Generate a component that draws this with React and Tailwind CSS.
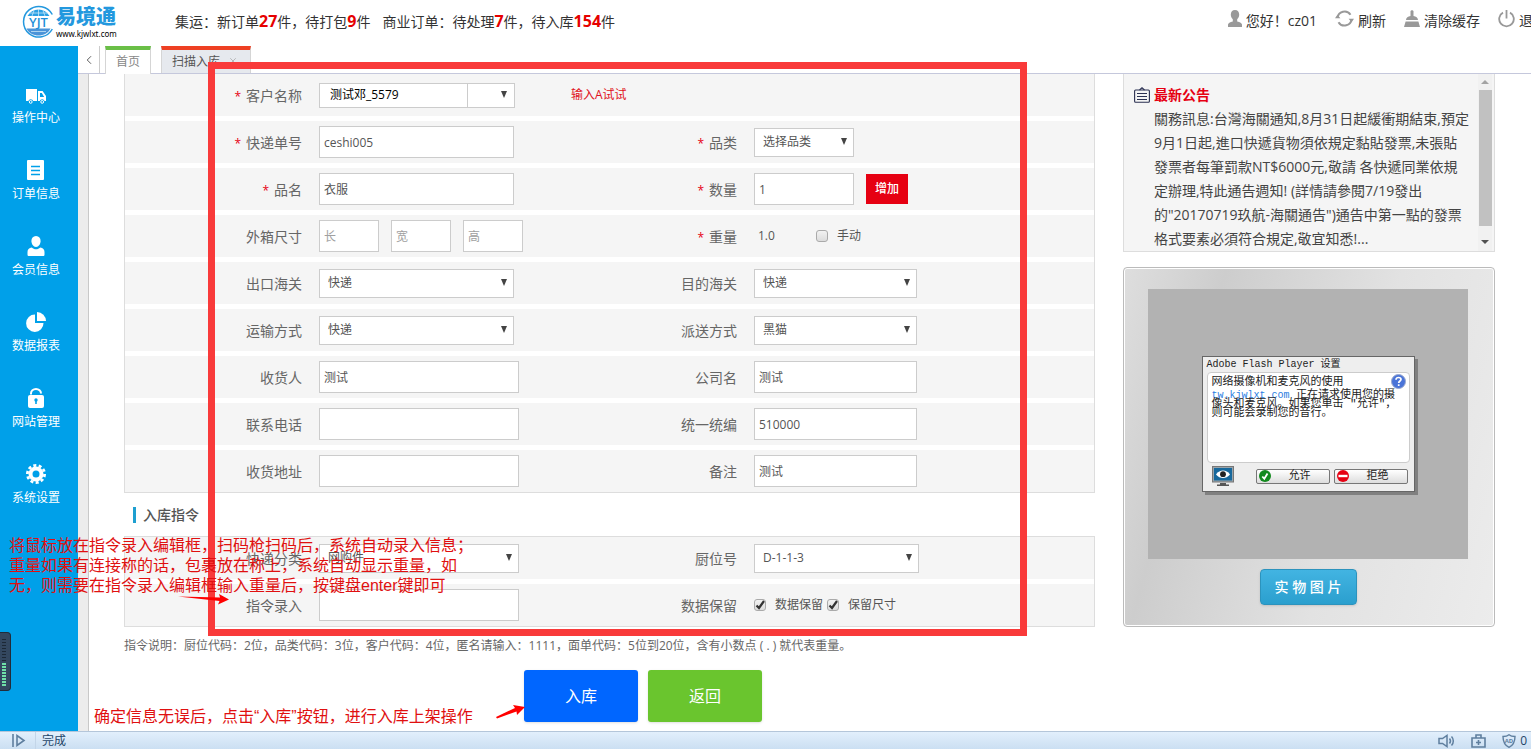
import { ChevronLeft, X } from 'lucide-react';
import clsx from 'clsx';

const MENU = [
  { label: '操作中心', icon: TruckIcon },
  { label: '订单信息', icon: OrderIcon },
  { label: '会员信息', icon: MemberIcon },
  { label: '数据报表', icon: PieIcon },
  { label: '网站管理', icon: LockIcon },
  { label: '系统设置', icon: GearIcon },
];

const NOTICE = [
  '關務訊息:台灣海關通知,8月31日起緩衝期結束,預定',
  '9月1日起,進口快遞貨物須依規定黏貼發票,未張貼',
  '發票者每筆罰款NT$6000元,敬請 各快遞同業依規',
  '定辦理,特此通告週知! (詳情請參閱7/19發出',
  '的"20170719玖航-海關通告")通告中第一點的發票',
  '格式要素必須符合規定,敬宜知悉!...',
];

/* ---------- icons ---------- */

function TruckIcon() {
  return (
    <svg width="20" height="15" viewBox="0 0 20 15" fill="#fff">
      <path fillRule="evenodd" d="M0 0h11v12H7.2a2.6 2.6 0 0 0-4.9 0H0zM12 2h4.6L20 7v5h-1.4a2.6 2.6 0 0 0-4.9 0H12zm2 2v4h4.2l-2.4-4z" />
      <circle cx="4.7" cy="12.9" r="1.4" fill="none" stroke="#fff" />
      <circle cx="16.2" cy="12.9" r="1.4" fill="none" stroke="#fff" />
    </svg>
  );
}

function OrderIcon() {
  return (
    <svg width="18" height="20" viewBox="0 0 18 20">
      <rect width="17" height="20" rx="1" fill="#fff" />
      <path d="M4 6.5h9M4 10.5h9M4 14.5h9" stroke="#00a0e9" strokeWidth="1.4" />
    </svg>
  );
}

function MemberIcon() {
  return (
    <svg width="18" height="20" viewBox="0 0 18 20" fill="#fff">
      <path d="M9 0c3 0 4.6 2.200 4.600 5S11.700 11 9 11 4.400 7.800 4.400 5 6 0 9 0z" />
      <path d="M4.800 11.500C6 12.700 7.400 13.300 9 13.300s3-.6 4.200-1.800C16 12 17.500 13.600 17.500 16v2.500c0 1-.5 1.500-1.500 1.500H2c-1 0-1.500-.5-1.500-1.500V16c0-2.400 1.500-4 4.300-4.500z" />
    </svg>
  );
}

function PieIcon() {
  return (
    <svg width="20" height="20" viewBox="0 0 20 20" fill="#fff">
      <path d="M9 2.500V11h8.500A8.700 8.700 0 1 1 9 2.500z" />
      <path d="M11 0a9 9 0 0 1 9 9h-9z" />
    </svg>
  );
}

function LockIcon() {
  return (
    <svg width="16" height="20" viewBox="0 0 16 20">
      <path d="M3 6.500V5.500a5 4.500 0 0 1 10 0" fill="none" stroke="#fff" strokeWidth="2" />
      <rect y="7" width="16" height="13" rx="2" fill="#fff" />
      <circle cx="8" cy="12" r="1.700" fill="#00a0e9" />
      <path d="M8 12v4" stroke="#00a0e9" strokeWidth="1.600" />
    </svg>
  );
}

function GearIcon() {
  return (
    <svg width="20" height="20" viewBox="0 0 20 20" fill="none" stroke="#fff">
      <circle cx="10" cy="10" r="5.500" strokeWidth="4" />
      <circle cx="10" cy="10" r="8.600" strokeWidth="2.800" pathLength="100" strokeDasharray="5.600 4.400" />
    </svg>
  );
}

function Logo() {
  return (
    <svg width="33" height="34" viewBox="0 0 33 34" aria-hidden="true">
      <path d="M30.300 9.500A15.300 15.300 0 1 0 30.300 24" fill="none" stroke="#2398de" strokeWidth="1.500" />
      <path d="M5.500 11a12.500 12.500 0 0 1 22 0z" fill="#2ba0e4" />
      <path d="M4.500 23.500h24c-2 4.500-7 7-12 7s-10-2.500-12-7z" fill="#4b94d8" />
      <path d="M16.500 4v7M12 5.500 10 11M21 5.500 23 11M7 8h19M9 26.500h15" stroke="#d9effb" strokeWidth=".7" />
      <text x="16.500" y="21.500" textAnchor="middle" fontSize="13" fontWeight="600" fontFamily="Open Sans, sans-serif" fill="#1f8fd8">YJT</text>
    </svg>
  );
}

function UserGlyph() {
  return (
    <svg width="14" height="18" viewBox="0 0 14 18" fill="#999">
      <path d="M7 0c2.700 0 4.200 1.900 4.200 4.500 0 2-.8 3.700-2 4.700v2.300c2.800.5 4.800 1.600 4.800 3.500H0c0-1.900 2-3 4.800-3.500V9.200c-1.200-1-2-2.700-2-4.700C2.800 1.900 4.300 0 7 0z" />
      <path d="M0 14.500h14V17H0z" />
    </svg>
  );
}

function RefreshGlyph() {
  return (
    <svg width="19" height="18" viewBox="0 0 19 18" fill="none" stroke="#999" strokeWidth="2">
      <path d="M2.500 8A7.100 7.100 0 0 1 15.500 4.800M16.600 9A7.100 7.100 0 0 1 3.500 12.200" />
      <path d="M0 8.200h5.400L2.400 4.800zM13.600 8.800H19l-2.400 3.400z" fill="#999" stroke="none" />
    </svg>
  );
}

function BroomGlyph() {
  return (
    <svg width="16" height="18" viewBox="0 0 16 18" fill="#999">
      <path d="M6.500 1 8 0l1.500 1v5c2.500.5 4.500 1.800 4.500 4H2c0-2.200 2-3.500 4.500-4zM1.600 11.500h12.800L16 17H0z" />
    </svg>
  );
}

function PowerGlyph() {
  return (
    <svg width="17" height="18" viewBox="0 0 17 18" fill="none" stroke="#999" strokeWidth="1.800">
      <path d="M5 2.600a7.300 7.300 0 1 0 7 0M8.500 0v8.500" />
    </svg>
  );
}

function BoardGlyph() {
  return (
    <svg width="16" height="16" viewBox="0 0 16 16" fill="none" stroke="#2b3152" strokeWidth="1.100">
      <rect x=".6" y="3" width="14.800" height="12.300" rx="1" />
      <path d="M5.500 3 8 .8 10.500 3M3 6.500h10M3 9.500h10M3 12.500h10" />
    </svg>
  );
}

/* ---------- form parts ---------- */

function Row({ children }) {
  return (
    <div className="grid h-[42px] grid-cols-[177fr_321fr_80fr_340fr] items-center gap-x-[17px] bg-[#f5f5f5]">
      {children}
    </div>
  );
}

function Label({ htmlFor, required, children }) {
  return (
    <label htmlFor={htmlFor} className="pt-0.5 whitespace-nowrap text-right text-sm text-[#666]">
      {required && <span className="mr-[5px] text-xs text-[#e60012]">*</span>}
      {children}
    </label>
  );
}

function TextField({ id, className, ...rest }) {
  return (
    <input
      id={id}
      type="text"
      className={clsx('block h-8 border border-[#ccc] bg-white px-1 text-xs text-[#555] outline-none placeholder:text-[#a0a0a0]', className)}
      {...rest}
    />
  );
}

function Select({ id, value, className }) {
  return (
    <div className={clsx('relative h-[29px]', className)}>
      <select id={id} className="h-full w-full appearance-none border border-[#ccc] bg-white px-2 text-xs text-[#555] outline-none">
        <option>{value}</option>
      </select>
      <Caret />
    </div>
  );
}

function Caret() {
  return (
    <svg className="pointer-events-none absolute right-[7px] top-1/2 -mt-1" width="6" height="7" viewBox="0 0 6 7">
      <path d="M0 0h6L3 7z" fill="#444" />
    </svg>
  );
}

function Check({ id, label, checked }) {
  return (
    <label htmlFor={id} className="flex items-center text-xs text-[#555]">
      <span className="relative mr-[9px] block size-3">
        <input
          id={id}
          type="checkbox"
          defaultChecked={checked}
          className="peer block size-3 appearance-none rounded-[3px] border border-[#aaa] bg-linear-to-b from-[#f2f2f2] to-[#dcdcdc]"
        />
        <svg className="pointer-events-none absolute inset-0 hidden peer-checked:block" width="12" height="12" viewBox="0 0 12 12">
          <path d="M2.500 6.500 5 9l5-7" fill="none" stroke="#333" strokeWidth="2.200" />
        </svg>
      </span>
      {label}
    </label>
  );
}

/* ---------- page sections ---------- */

function Header() {
  return (
    <header className="flex h-[46px] items-center overflow-hidden whitespace-nowrap bg-white pb-1 text-sm text-[#333]">
      <a href="#" className="flex w-[175px] shrink-0 items-center gap-px pl-[22px] pt-0.5">
        <Logo />
        <span className="flex flex-col">
          <b className="text-xl leading-6 font-black text-[#2398de]">易境通</b>
          <span className="font-['Noto_Sans',sans-serif] text-[8px] leading-[10px] text-black">www.kjwlxt.com</span>
        </span>
      </a>
      <p className="flex shrink-0 gap-3">
        <span>集运：新订单<Num>27</Num>件，待打包<Num>9</Num>件</span>
        <span>商业订单：待处理<Num>7</Num>件，待入库<Num>154</Num>件</span>
      </p>
      <nav className="-mr-4 ml-auto flex shrink-0 gap-[18px]">
        <TopLink icon={<UserGlyph />}>您好！cz01</TopLink>
        <TopLink icon={<RefreshGlyph />}>刷新</TopLink>
        <TopLink icon={<BroomGlyph />}>清除缓存</TopLink>
        <TopLink icon={<PowerGlyph />}>退出</TopLink>
      </nav>
    </header>
  );
}

function Num({ children }) {
  return <b className="text-base leading-5 text-[#e60000]">{children}</b>;
}

function TopLink({ icon, children }) {
  return (
    <a href="#" className="flex items-center gap-1">
      <span className="pb-1">{icon}</span>
      {children}
    </a>
  );
}

function Sidebar() {
  return (
    <nav className="flex w-[78px] shrink-0 flex-col gap-8 bg-[#00a0e9] pr-1.5 pt-[38px]">
      {MENU.map(({ label, icon: Icon }) => (
        <a key={label} href="#" className="flex flex-col items-center gap-1 text-xs leading-5 text-white">
          <span className="flex h-5 items-end"><Icon /></span>
          {label}
        </a>
      ))}
    </nav>
  );
}

function Tabs() {
  return (
    <div className="flex h-7 border-b border-[#c5c8dc] text-xs leading-6">
      <button type="button" aria-label="收起" className="flex w-[22px] items-center justify-center border-r border-[#ccc] text-[#444]">
        <ChevronLeft size={14} strokeWidth={1.5} />
      </button>
      <a href="#" className="-mb-px ml-[5px] w-[46px] border-x border-t-4 border-x-[#d5d5d5] border-t-[#6abf47] bg-white text-center text-[#888]">
        首页
      </a>
      <a href="#" className="ml-2.5 flex w-[90px] items-start justify-between border-x border-t-4 border-x-[#d5d5d5] border-t-[#ee4023] bg-[#e6e9ee] pl-2.5 pr-3 text-[#555]">
        扫描入库
        <X size={10} strokeWidth={1.5} className="mt-1.5 text-[#999]" />
      </a>
    </div>
  );
}

function EntryForm() {
  return (
    <div className="flex flex-col gap-[5px] border border-t-0 border-[#ddd]">
      <Row>
        <Label htmlFor="customer" required>客户名称</Label>
        <div className="flex items-center whitespace-nowrap">
          <div className="relative flex h-[25px] w-[196px] shrink-0 border border-[#ccc] bg-white">
            <input id="customer" defaultValue="测试邓_5579" className="min-w-0 flex-1 border-r border-[#ccc] px-2.5 text-xs text-black outline-none" />
            <select aria-label="选择客户" className="w-[46px] appearance-none outline-none" />
            <Caret />
          </div>
          <span className="ml-14 text-xs text-[#e01020]">输入A试试</span>
        </div>
      </Row>
      <Row>
        <Label htmlFor="waybill" required>快递单号</Label>
        <TextField id="waybill" defaultValue="ceshi005" className="w-[195px]" />
        <Label htmlFor="category" required>品类</Label>
        <Select id="category" value="选择品类" className="w-[100px]" />
      </Row>
      <Row>
        <Label htmlFor="goods" required>品名</Label>
        <TextField id="goods" defaultValue="衣服" className="w-[195px]" />
        <Label htmlFor="qty" required>数量</Label>
        <div className="flex items-center gap-3">
          <TextField id="qty" defaultValue="1" className="w-[100px]" />
          <button type="button" className="h-[30px] w-[42px] bg-[#e60012] text-xs font-medium text-white">增加</button>
        </div>
      </Row>
      <Row>
        <Label htmlFor="len">外箱尺寸</Label>
        <div className="flex gap-3">
          <TextField id="len" placeholder="长" className="w-[60px]" />
          <TextField aria-label="宽" placeholder="宽" className="w-[60px]" />
          <TextField aria-label="高" placeholder="高" className="w-[60px]" />
        </div>
        <Label htmlFor="manual" required>重量</Label>
        <div className="flex items-center pl-1 text-xs text-[#555]">
          <span className="w-[58px]">1.0</span>
          <Check id="manual" label="手动" />
        </div>
      </Row>
      <Row>
        <Label htmlFor="export">出口海关</Label>
        <Select id="export" value="快递" className="w-[195px]" />
        <Label htmlFor="dest">目的海关</Label>
        <Select id="dest" value="快递" className="w-[163px]" />
      </Row>
      <Row>
        <Label htmlFor="transport">运输方式</Label>
        <Select id="transport" value="快递" className="w-[195px]" />
        <Label htmlFor="delivery">派送方式</Label>
        <Select id="delivery" value="黑猫" className="w-[163px]" />
      </Row>
      <Row>
        <Label htmlFor="receiver">收货人</Label>
        <TextField id="receiver" defaultValue="测试" className="w-[200px]" />
        <Label htmlFor="company">公司名</Label>
        <TextField id="company" defaultValue="测试" className="w-[163px]" />
      </Row>
      <Row>
        <Label htmlFor="phone">联系电话</Label>
        <TextField id="phone" className="w-[200px]" />
        <Label htmlFor="taxno">统一统编</Label>
        <TextField id="taxno" defaultValue="510000" className="w-[163px]" />
      </Row>
      <Row>
        <Label htmlFor="address">收货地址</Label>
        <TextField id="address" className="w-[200px]" />
        <Label htmlFor="remark">备注</Label>
        <TextField id="remark" defaultValue="测试" className="w-[163px]" />
      </Row>
    </div>
  );
}

function CommandForm() {
  return (
    <section>
      <h2 className="flex h-[43px] items-center gap-[7px] pl-[9px] text-sm font-medium text-[#555]">
        <span className="h-4 w-[3px] bg-[#1e9fd0]" />
        入库指令
      </h2>
      <div className="flex flex-col gap-[5px] border border-[#ddd]">
        <Row>
          <Label htmlFor="express">快递分类</Label>
          <Select id="express" value="网购件" className="w-[200px]" />
          <Label htmlFor="slot">厨位号</Label>
          <Select id="slot" value="D-1-1-3" className="w-[165px]" />
        </Row>
        <Row>
          <Label htmlFor="command">指令录入</Label>
          <TextField id="command" className="w-[200px]" />
          <Label htmlFor="keep-data">数据保留</Label>
          <div className="flex gap-1">
            <Check id="keep-data" label="数据保留" checked />
            <Check id="keep-size" label="保留尺寸" checked />
          </div>
        </Row>
      </div>
      <p className="mt-[9px] text-xs leading-5 text-[#666]">
        指令说明：厨位代码：2位，品类代码：3位，客户代码：4位，匿名请输入：1111，面单代码：5位到20位，含有小数点 ( . ) 就代表重量。
      </p>
      <div className="mt-3.5 flex justify-center gap-2.5 pl-[67px] text-base text-white">
        <button type="submit" className="h-[52px] w-[114px] rounded-[3px] bg-[#0066ff] shadow-sm">入库</button>
        <button type="button" className="h-[52px] w-[114px] rounded-[3px] bg-[#6ac52e] shadow-sm">返回</button>
      </div>
    </section>
  );
}

function Notice() {
  return (
    <section className="flex h-[178px] border border-t-0 border-[#ddd] bg-[#f5f5f5]">
      <div className="min-w-0 flex-1 overflow-hidden pl-2.5 pt-[9px]">
        <h2 className="flex items-center gap-1 text-sm leading-6 font-bold text-[#e60012]">
          <BoardGlyph />
          最新公告
        </h2>
        <div className="pl-5 font-['Open_Sans','Noto_Sans_CJK_TC',sans-serif] text-sm leading-6 text-[#444]">
          {NOTICE.map((line) => (
            <p key={line} className="whitespace-nowrap">{line}</p>
          ))}
        </div>
      </div>
      <div className="mr-0.5 flex w-[14px] flex-col items-center justify-between bg-[#f1f1f1] pb-[7px] pt-1.5">
        <svg width="8" height="4" viewBox="0 0 8 4"><path d="M0 4h8L4 0z" fill="#a3a3a3" /></svg>
        <div className="mb-3.5 mt-1.5 w-[13px] flex-1 bg-[#c1c1c1]" />
        <svg width="8" height="4" viewBox="0 0 8 4"><path d="M0 0h8L4 4z" fill="#505050" /></svg>
      </div>
    </section>
  );
}

function FlashDialog() {
  return (
    <div className="flex h-[136px] w-[213px] flex-col border border-[#666] bg-[#eee] px-1 font-['Liberation_Mono','Noto_Sans_CJK_SC',monospace] text-[#222] shadow-[3px_3px_0_#808080]">
      <h3 className="text-[10px] leading-[15px]">Adobe Flash Player 设置</h3>
      <div className="flex h-[91px] rounded border border-[#ccc] bg-white pl-1 pr-[3px]">
        <div className="min-w-0 flex-1 whitespace-nowrap text-[11px]">
          <p className="leading-[18px]">网络摄像机和麦克风的使用</p>
          {/* the plug-in packs these three lines tighter than the glyphs */}
          <div className="leading-[9px]">
            <p><a href="#" className="text-[10px] text-[#2a7de1]">tw.kjwlxt.com</a> 正在请求使用您的摄</p>
            <p>像头和麦克风。如果您单击 "允许"，</p>
            <p>则可能会录制您的音行。</p>
          </div>
        </div>
        <svg className="-ml-4 mt-[1px] shrink-0" width="15" height="15" viewBox="0 0 15 15">
          <circle cx="7.500" cy="7.500" r="7" fill="#4a74d8" stroke="#9aa8cc" />
          <path d="M5 5.800C5 4.300 6 3.500 7.500 3.500S10 4.300 10 5.500c0 1.500-2.300 1.600-2.300 3.500M7.700 10.300v1.700" fill="none" stroke="#fff" strokeWidth="1.700" />
        </svg>
      </div>
      <div className="flex flex-1 items-center pb-0.5 pl-[5px] pr-0.5">
        <svg width="22" height="20" viewBox="0 0 22 20">
          <rect x=".5" y=".5" width="21" height="15.500" fill="#9aa4aa" stroke="#777" />
          <rect x="2" y="2" width="18" height="12.500" fill="#17689c" />
          <path d="M4 8.500C6 5.500 8.500 4.500 11 4.500s5 1 7 4c-2 2.500-4.500 3.500-7 3.500s-5-1-7-3.500z" fill="#fff" />
          <circle cx="11" cy="8.200" r="2.900" fill="#222" />
          <path d="M8 17h6v1.500h3V20H5v-1.500h3z" fill="#555" />
        </svg>
        <DialogButton label="允许" className="ml-auto">
          <circle cx="6" cy="6" r="6" fill="#128a1e" />
          <path d="m3.300 6.500 2 2.300L8.500 3.500" fill="none" stroke="#fff" strokeWidth="1.800" />
        </DialogButton>
        <DialogButton label="拒绝" className="ml-1">
          <circle cx="6" cy="6" r="6" fill="#e60012" />
          <path d="M1.500 6h9" stroke="#fff" strokeWidth="2.400" />
        </DialogButton>
      </div>
    </div>
  );
}

function DialogButton({ label, className, children }) {
  return (
    <button type="button" className={clsx('flex h-[15px] w-[74px] items-center rounded-[2px] border border-[#777] bg-linear-to-b from-white to-[#ddd] pl-0.5 text-[11px] leading-3', className)}>
      <svg width="12" height="12" viewBox="0 0 12 12">{children}</svg>
      <span className="flex-1">{label}</span>
    </button>
  );
}

function CameraCard() {
  return (
    <section className="mt-[15px] flex flex-col items-center rounded border border-[#bbb] bg-[linear-gradient(105deg,#dedede,#cdcdcd_22%,#e2e2e2_60%,#ececec)] py-[21px] pr-0.5 ring-1 ring-white ring-inset">
      <div className="flex h-[270px] w-[320px] items-center justify-center bg-[#b2b2b2]">
        <FlashDialog />
      </div>
      <button type="button" className="mt-2.5 h-9 w-[97px] rounded border border-[#2c93bd] bg-linear-to-b from-[#42b4e2] to-[#2a9fce] text-sm font-medium text-white shadow">
        实 物 图 片
      </button>
    </section>
  );
}

function StatusBar() {
  return (
    <footer className="flex h-[18px] items-center border-t border-[#b4c6da] bg-linear-to-b from-[#e2effc] to-[#cbdff2] text-xs leading-4 text-[#1f4568]">
      <span className="flex h-full w-9 items-center border-r border-[#c3d5e8] pl-3">
        <svg width="14" height="13" viewBox="0 0 14 13" fill="none" stroke="#5f7f9f" strokeWidth="1.600">
          <path d="M1 0v13M5 1.500v10l7-5z" />
        </svg>
      </span>
      <span className="pl-1.5">完成</span>
      <div className="ml-auto flex items-center gap-4 pr-1">
        <svg width="17" height="14" viewBox="0 0 17 14" fill="none" stroke="#5f7f9f" strokeWidth="1.500">
          <path d="M1 4.500h3.500L9 1.500v11L4.500 9.500H1zM11.500 4.500a4 4 0 0 1 0 5M13.500 2.500a6.500 6.500 0 0 1 0 9" />
        </svg>
        <svg width="15" height="14" viewBox="0 0 15 14" fill="none" stroke="#5f7f9f" strokeWidth="1.600">
          <path d="M1 4h13v9H1zM5 4V1h5v3M7.500 6v5M5 8.500h5" />
        </svg>
        <span className="flex items-center gap-1">
          <svg width="14" height="14" viewBox="0 0 14 14">
            <path d="M1 2.500C3.500 2.500 5.500 2 7 .8 8.500 2 10.500 2.500 13 2.500c0 5-1 8.500-6 10.800C2 11 1 7.500 1 2.500z" fill="none" stroke="#5f7f9f" strokeWidth="1.400" />
            <text x="7" y="9" textAnchor="middle" fontSize="6" fontWeight="700" fontFamily="Open Sans, sans-serif" fill="#5f7f9f">AD</text>
          </svg>
          0
        </span>
      </div>
    </footer>
  );
}

function LevelMeter() {
  return (
    <div className="absolute left-0 top-[632px] h-[59px] w-[11px] rounded-r border border-l-0 border-[#222c3a] bg-[#33475f] px-0.5 py-1.5">
      <div className="h-6 w-1 bg-[repeating-linear-gradient(#1c2836_0_1px,#33475f_1px_3px)]" />
      <div className="h-[23px] w-1 bg-[repeating-linear-gradient(#6fe0a8_0_2px,#33475f_2px_3px)]" />
    </div>
  );
}

/* red frame, arrows and remarks that lie over the page */
function Annotations() {
  return (
    <div className="pointer-events-none absolute inset-0 font-['Liberation_Sans','Noto_Sans_CJK_SC',sans-serif] text-base leading-5 whitespace-nowrap text-[#e01010]">
      <div className="absolute left-[208px] top-[62px] h-[574px] w-[819px] border-[7px] border-[#f93a3a]" />
      <div className="absolute left-[9px] top-[536px]">
        <p>将鼠标放在指令录入编辑框，扫码枪扫码后，系统自动录入信息；</p>
        <p>重量如果有连接称的话，包裹放在称上，系统自动显示重量，如</p>
        <p>无，则需要在指令录入编辑框输入重量后，按键盘enter键即可</p>
      </div>
      <svg className="absolute left-[178px] top-[594px]" width="51" height="11" viewBox="0 0 51 11">
        <path d="M0 2.500 42 3.500 41 0l10 5.500L40 10.500l1.500-3.500z" fill="#f00" />
      </svg>
      <p className="absolute left-[94px] top-[707px]">确定信息无误后，点击“入库”按钮，进行入库上架操作</p>
      <svg className="absolute left-[496px] top-[704px]" width="29" height="15" viewBox="0 0 29 15">
        <path d="M0 13 19 4l-2-3 12 2-8 8-.5-3.500L1 14.500z" fill="#f00" />
      </svg>
    </div>
  );
}

export default function App() {
  return (
    <div className="relative flex min-h-screen flex-col overflow-x-hidden bg-white font-['Open_Sans','Noto_Sans_CJK_SC',sans-serif]">
      <Header />
      <div className="flex flex-1">
        <Sidebar />
        <div className="flex min-w-0 flex-1 flex-col">
          <Tabs />
          <div className="flex flex-1">
            <div className="w-[11px] shrink-0 border-r border-[#c8c8c8] bg-[#ececec]" />
            <main className="flex min-w-0 flex-1 items-start gap-7 pb-2 pl-[35px] pr-9">
              <form className="min-w-0 flex-1" onSubmit={(e) => e.preventDefault()}>
                <EntryForm />
                <CommandForm />
              </form>
              <aside className="w-[372px] shrink-0">
                <Notice />
                <CameraCard />
              </aside>
            </main>
          </div>
        </div>
      </div>
      <StatusBar />
      <LevelMeter />
      <Annotations />
    </div>
  );
}
